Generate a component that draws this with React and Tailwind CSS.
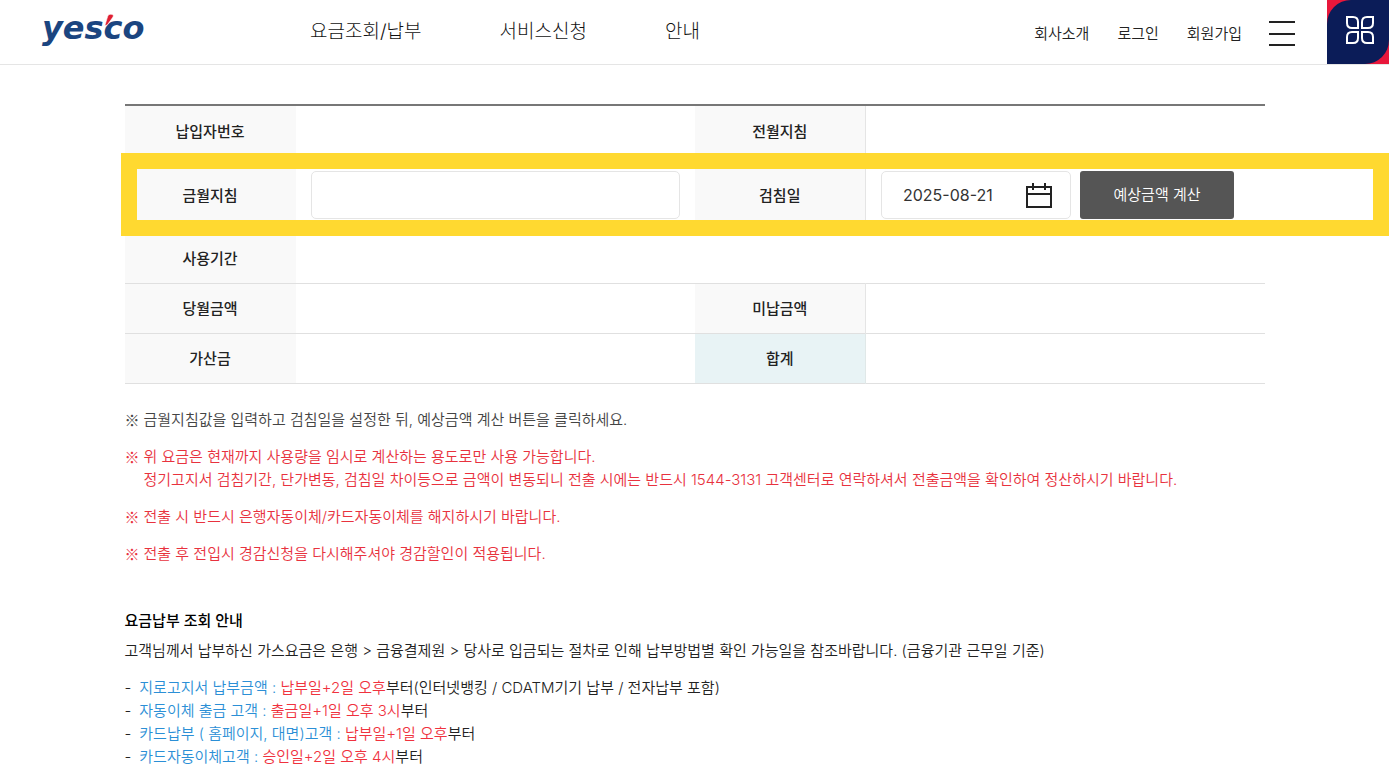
import React, { useState } from 'react'

const navItems = [
    { name: '요금조회/납부', href: '#bill' },
    { name: '서비스신청', href: '#service' },
    { name: '안내', href: '#guide' },
]

const userItems = [
    { name: '회사소개', href: '#company' },
    { name: '로그인', href: '#login' },
    { name: '회원가입', href: '#join' },
]

const payGuides = [
    { label: '지로고지서 납부금액 :', when: '납부일+2일 오후', rest: '부터(인터넷뱅킹 / CDATM기기 납부 / 전자납부 포함)' },
    { label: '자동이체 출금 고객 :', when: '출금일+1일 오후 3시', rest: '부터' },
    { label: '카드납부 ( 홈페이지, 대면)고객 :', when: '납부일+1일 오후', rest: '부터' },
    { label: '카드자동이체고객 :', when: '승인일+2일 오후 4시', rest: '부터' },
]

const Logo = () => {
    return (
        <a href="#home" aria-label="yesco" className="relative block font-['DejaVu_Sans',sans-serif] text-[32px] leading-none font-bold italic text-[#1b4580]">
            yesco
            <svg className="absolute top-[2px] left-[62px] h-3 w-[10px]" viewBox="0 0 10 12">
                <path d="M6.6 0.3C9 0 9.9 1.4 9 3L3.4 10.8L0.8 11.8L3.6 2.6C4.2 1 5.2 0.4 6.6 0.3Z" fill="#e01f32" stroke="#fff" strokeWidth="0.6" />
            </svg>
        </a>
    )
}

const CloverIcon = () => {
    return (
        <svg className="h-[30px] w-[30px]" viewBox="0 0 30 30" fill="none" stroke="#fff" strokeWidth="2">
            <path d="M2 2H8Q13 2 13 7V13H7Q2 13 2 8Z" />
            <path d="M28 2H22Q17 2 17 7V13H23Q28 13 28 8Z" />
            <path d="M2 28H8Q13 28 13 23V17H7Q2 17 2 22Z" />
            <path d="M28 28H22Q17 28 17 23V17H23Q28 17 28 22Z" />
        </svg>
    )
}

const CalendarIcon = () => {
    return (
        <svg className="h-7 w-7" viewBox="0 0 28 28" fill="none" stroke="#222" strokeWidth="2">
            <path d="M2 6H26V26H2ZM2 13H26M8 2V9M20 2V9" />
        </svg>
    )
}

const Header = () => {
    return (
        <header className="flex h-[65px] border-b border-[#e5e5e5]">
            <div className="flex w-[310px] shrink-0 items-start pt-3 pl-[42px]">
                <Logo />
            </div>
            <nav className="flex flex-1 gap-[78px] pt-[18px] text-[19px] leading-7 font-light text-[#111]">
                {navItems.map((item) => (
                    <a key={item.name} href={item.href} className="whitespace-nowrap">{item.name}</a>
                ))}
            </nav>
            <div className="flex gap-7 pt-[22px] text-[15px] leading-6 font-[350] text-[#222]">
                {userItems.map((item) => (
                    <a key={item.name} href={item.href} className="whitespace-nowrap">{item.name}</a>
                ))}
            </div>
            <button type="button" aria-label="메뉴" className="mt-[21px] mr-8 ml-[27px] flex h-[25px] w-[26px] flex-col justify-between">
                <span className="h-[2px] w-full bg-[#222]" />
                <span className="h-[2px] w-full bg-[#222]" />
                <span className="h-[2px] w-full bg-[#222]" />
            </button>
            <button type="button" aria-label="바로가기" className="h-16 w-[62px] bg-[#e8173b]">
                <span className="flex h-full w-full items-center justify-center rounded-tl-[24px] rounded-br-[24px] bg-[#0b1c58] pb-1 pl-1">
                    <CloverIcon />
                </span>
            </button>
        </header>
    )
}

const Th = ({ children, className = 'bg-[#f9f9f9]' }) => {
    return <th scope="row" className={`pt-[2px] font-medium ${className}`}>{children}</th>
}

const BillTable = () => {
    const [reading, setReading] = useState('')
    const [date, setDate] = useState('2025-08-21')

    return (
        <div className="relative">
            <table className="w-full table-fixed border-collapse border-t-2 border-[#777] text-[15px] leading-6 text-[#222]">
                <colgroup>
                    <col className="w-[15%]" />
                    <col className="w-[35%]" />
                    <col className="w-[15%]" />
                    <col className="w-[35%]" />
                </colgroup>
                <tbody>
                    <tr className="h-[50px]">
                        <Th>납입자번호</Th>
                        <td />
                        <Th className="border-r border-[#e5e5e5] bg-[#f9f9f9]">전월지침</Th>
                        <td />
                    </tr>
                    <tr className="h-[79px]">
                        <Th><label htmlFor="reading">금월지침</label></Th>
                        <td className="px-[15px]">
                            <input
                                id="reading"
                                type="text"
                                value={reading}
                                onChange={(e) => setReading(e.target.value)}
                                className="block h-12 w-full rounded-[5px] border border-[#e5e5e5] px-5"
                            />
                        </td>
                        <Th className="border-r border-[#e5e5e5] bg-[#f9f9f9]"><label htmlFor="date">검침일</label></Th>
                        <td className="pl-[15px]">
                            <div className="flex gap-[9px]">
                                <div className="flex h-12 w-[190px] items-center rounded-[5px] border border-[#e5e5e5] pr-[17px] pl-[21px]">
                                    <input
                                        id="date"
                                        type="text"
                                        value={date}
                                        onChange={(e) => setDate(e.target.value)}
                                        className="w-full min-w-0 text-base text-[#333]"
                                    />
                                    <button type="button" aria-label="날짜 선택" className="shrink-0"><CalendarIcon /></button>
                                </div>
                                <button type="button" className="h-12 w-[154px] rounded-[3px] bg-[#555] font-[350] text-white">예상금액 계산</button>
                            </div>
                        </td>
                    </tr>
                    <tr className="h-[49px] border-b border-[#e0e0e0]">
                        <Th>사용기간</Th>
                        <td colSpan={3} />
                    </tr>
                    <tr className="h-[50px] border-b border-[#e0e0e0]">
                        <Th>당월금액</Th>
                        <td />
                        <Th className="border-r border-[#e5e5e5] bg-[#f9f9f9]">미납금액</Th>
                        <td />
                    </tr>
                    <tr className="h-[50px] border-b border-[#e0e0e0]">
                        <Th>가산금</Th>
                        <td />
                        <Th className="border-r border-[#e0e8e8] bg-[#e8f3f5]">합계</Th>
                        <td />
                    </tr>
                </tbody>
            </table>
            {/* highlight frame over the input row */}
            <div className="pointer-events-none absolute top-[49px] -right-[124px] -left-1 h-[83px] border-16 border-[#ffd930]" />
        </div>
    )
}

const Note = ({ children, className = '' }) => {
    return (
        <li className={`flex ${className}`}>
            <span className="w-[19px] shrink-0 font-['Noto_Sans_CJK_KR',sans-serif]">※</span>
            <div>{children}</div>
        </li>
    )
}

const Notes = () => {
    return (
        <ul className="mt-6 space-y-[14px] text-[15px] leading-[23px] font-[350] text-[#e8323e]">
            <Note className="text-[#444]">금월지침값을 입력하고 검침일을 설정한 뒤, 예상금액 계산 버튼을 클릭하세요.</Note>
            <Note>
                <p>위 요금은 현재까지 사용량을 임시로 계산하는 용도로만 사용 가능합니다.</p>
                <p>정기고지서 검침기간, 단가변동, 검침일 차이등으로 금액이 변동되니 전출 시에는 반드시 1544-3131 고객센터로 연락하셔서 전출금액을 확인하여 정산하시기 바랍니다.</p>
            </Note>
            <Note>전출 시 반드시 은행자동이체/카드자동이체를 해지하시기 바랍니다.</Note>
            <Note>전출 후 전입시 경감신청을 다시해주셔야 경감할인이 적용됩니다.</Note>
        </ul>
    )
}

const PayGuide = () => {
    return (
        <section className="mt-11 text-[15px] leading-[23px] font-[350] text-[#222]">
            <h2 className="font-medium text-black">요금납부 조회 안내</h2>
            <p className="mt-[7px]">고객님께서 납부하신 가스요금은 은행 &gt; 금융결제원 &gt; 당사로 입금되는 절차로 인해 납부방법별 확인 가능일을 참조바랍니다. (금융기관 근무일 기준)</p>
            <ul className="mt-[14px]">
                {payGuides.map((item) => (
                    <li key={item.label} className="flex gap-2">
                        <span>-</span>
                        <p>
                            <span className="text-[#2b8fd6]">{item.label}</span>{' '}
                            <span className="text-[#f0323e]">{item.when}</span>
                            {item.rest}
                        </p>
                    </li>
                ))}
            </ul>
        </section>
    )
}

export default function App() {
    return (
        <div className="h-screen overflow-hidden bg-white font-['Inter','Noto_Sans_CJK_KR',sans-serif]">
            <Header />
            <main className="mx-auto mt-[39px] max-w-[1140px]">
                <BillTable />
                <Notes />
                <PayGuide />
            </main>
        </div>
    )
}
